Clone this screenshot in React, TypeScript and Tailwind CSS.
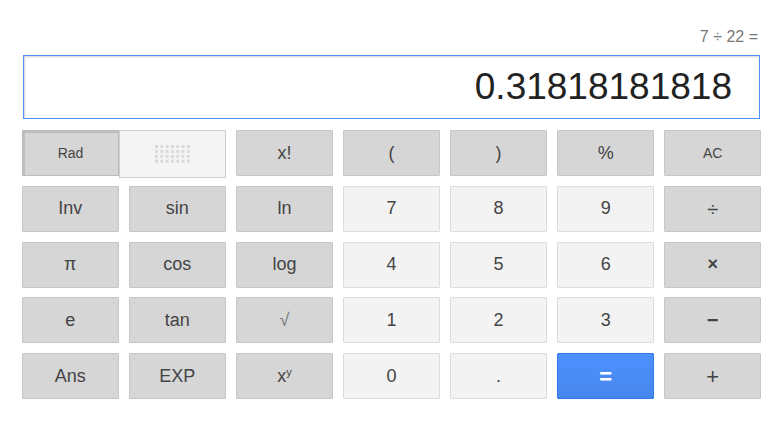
import React from 'react';

type Key = { label: React.ReactNode; kind: 'op' | 'num' | 'eq'; small?: boolean; bold?: boolean };

const keys: Key[] = [
  { label: 'x!', kind: 'op' },
  { label: '(', kind: 'op' },
  { label: ')', kind: 'op' },
  { label: '%', kind: 'op' },
  { label: 'AC', kind: 'op', small: true },
  { label: 'Inv', kind: 'op' },
  { label: 'sin', kind: 'op' },
  { label: 'ln', kind: 'op' },
  { label: '7', kind: 'num' },
  { label: '8', kind: 'num' },
  { label: '9', kind: 'num' },
  { label: <span className="text-[20px]">÷</span>, kind: 'op' },
  { label: 'π', kind: 'op' },
  { label: 'cos', kind: 'op' },
  { label: 'log', kind: 'op' },
  { label: '4', kind: 'num' },
  { label: '5', kind: 'num' },
  { label: '6', kind: 'num' },
  { label: '×', kind: 'op', bold: true },
  { label: 'e', kind: 'op' },
  { label: 'tan', kind: 'op' },
  { label: <span className="text-[#777]">√</span>, kind: 'op' },
  { label: '1', kind: 'num' },
  { label: '2', kind: 'num' },
  { label: '3', kind: 'num' },
  { label: <span className="text-[20px]">−</span>, kind: 'op', bold: true },
  { label: 'Ans', kind: 'op' },
  { label: 'EXP', kind: 'op' },
  {
    label: (
      <span>
        x<sup className="text-[11px]">y</sup>
      </span>
    ),
    kind: 'op',
  },
  { label: '0', kind: 'num' },
  { label: '.', kind: 'num' },
  { label: <span className="text-[22px]">=</span>, kind: 'eq', bold: true },
  { label: <span className="text-[22px]">+</span>, kind: 'op' },
];

const styleFor = (k: Key) => {
  switch (k.kind) {
    case 'num':
      return 'bg-[#f3f3f3] border-[#dcdcdc] text-[#444]';
    case 'eq':
      return 'bg-gradient-to-b from-[#4d90fe] to-[#4787ed] border-[#3079ed] text-white';
    default:
      return 'bg-[#d6d6d6] border-[#c6c6c6] text-[#444]';
  }
};

function DotGrid() {
  const dots = [];
  for (let r = 0; r < 4; r++) {
    for (let c = 0; c < 7; c++) {
      dots.push(<rect key={`${r}-${c}`} x={c * 5.3} y={r * 4.9} width="3" height="3" fill="#d9d9d9" />);
    }
  }
  return (
    <svg width="35" height="18" viewBox="0 0 35 18">
      {dots}
    </svg>
  );
}

export default function App() {
  return (
    <div className="w-[772px] h-[428px] bg-white pl-[22px] pr-[11px] pt-[27px]" style={{ fontFamily: '"Liberation Sans", Arial, sans-serif' }}>
      <div className="h-[20px] text-right pr-[3px] text-[16px] leading-[20px] text-[#777]">7 ÷ 22 =</div>

      <div className="mt-[8px] mx-[1px] h-[64px] border border-[#4d90fe] shadow-[inset_1px_1px_2px_rgba(0,0,0,0.18)] flex items-center justify-end pr-[27px]">
        <span className="text-[37px] leading-none text-[#222] pb-[2px]">0.31818181818</span>
      </div>

      <div className="mt-[11px] grid grid-cols-7 gap-x-[10.5px] gap-y-[9.75px] auto-rows-[46px]">
        <div className="col-span-2 flex">
          <button className="w-[97px] h-full bg-[#d6d6d6] border border-[#bdbdbd] shadow-[inset_2px_2px_1px_rgba(0,0,0,0.12)] text-[14px] text-[#444]">
            Rad
          </button>
          <button className="flex-1 h-[48px] bg-[#f4f4f4] border border-[#cfcfcf] flex items-center justify-center">
            <DotGrid />
          </button>
        </div>
        {keys.map((k, i) => (
          <button
            key={i}
            className={`border rounded-[1px] flex items-center justify-center ${styleFor(k)} ${
              k.small ? 'text-[14px]' : 'text-[18px]'
            } ${k.bold ? 'font-bold' : ''}`}
          >
            {k.label}
          </button>
        ))}
      </div>
    </div>
  );
}
